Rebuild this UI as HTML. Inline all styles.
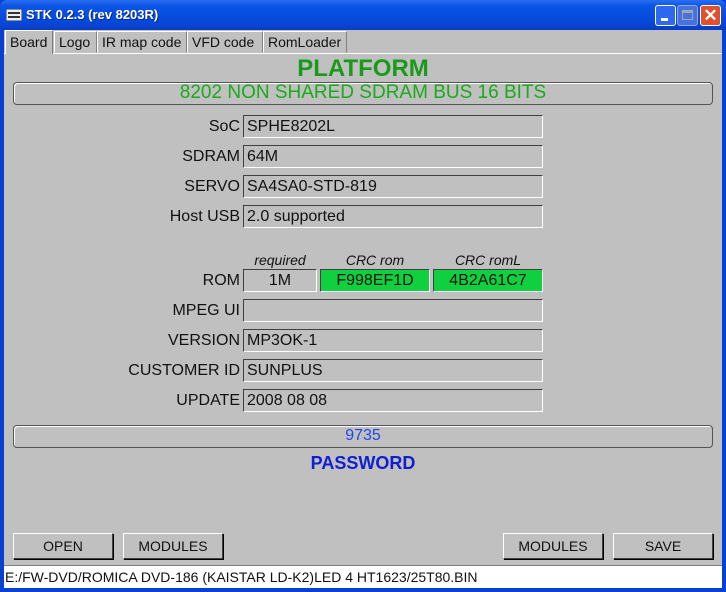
<!DOCTYPE html>
<html><head><style>
*{margin:0;padding:0;box-sizing:border-box}
body{width:726px;height:592px;background:#0841d0;font-family:"Liberation Sans",Arial,sans-serif;position:relative;overflow:hidden}
.title{position:absolute;left:0;top:0;width:726px;height:30px;background:linear-gradient(#2a6df2,#0a55e6 20%,#0546d8 80%,#0a3cc0);border-radius:7px 7px 0 0}
.title span{position:absolute;left:26px;top:7px;color:#fff;font-weight:bold;font-size:13px;font-family:"Liberation Sans",sans-serif;text-shadow:1px 1px #0a2a80}
.body{position:absolute;left:4px;top:30px;width:718px;height:558px;background:#c0c0c0}
.a{position:absolute}
.lbl{position:absolute;font-size:16px;color:#111;text-align:right;width:200px}
.fld{position:absolute;height:23px;background:#c0c0c0;border:1px solid;border-color:#404040 #fff #fff #404040;font-size:16px;padding:2px 3px;color:#111;white-space:nowrap}
.bar{position:absolute;left:9px;width:700px;height:23px;border:1px solid #555;border-radius:4px;box-shadow:inset 1px 1px #fff;text-align:center;font-size:19px;line-height:20px}
.btn{position:absolute;top:503px;width:100px;height:26px;border:1px solid;border-color:#fff #404040 #404040 #fff;box-shadow:1px 1px #000;text-align:center;font-size:14px;line-height:24px;color:#111}
.tab{position:absolute;top:1px;height:22px;border:1px solid;border-color:#fff #808080 #c0c0c0 #fff;font-size:14px;padding:2px 4px;color:#111;white-space:nowrap}
.hd{position:absolute;font-size:14px;font-style:italic;text-align:center;color:#111;top:222px}
</style></head><body>
<div class="title">
<svg class="a" style="left:6px;top:9px" width="16" height="12"><rect x="0" y="0" width="16" height="12" fill="#eee" stroke="#333"/><rect x="2" y="3" width="12" height="2" fill="#333"/><rect x="2" y="7" width="12" height="2" fill="#333"/></svg>
<span>STK 0.2.3 (rev 8203R)</span>
<div class="a" style="left:655px;top:5px;width:21px;height:21px;border:1px solid #fff;border-radius:3px;background:#2d68ee"><div class="a" style="left:5px;top:12px;width:7px;height:3px;background:#fff"></div></div>
<div class="a" style="left:677px;top:5px;width:21px;height:21px;border:1px solid #8aa8ee;border-radius:3px;background:#4a70dc"><div class="a" style="left:4px;top:4px;width:11px;height:10px;border:1px solid #9ab;border-top-width:3px"></div></div>
<div class="a" style="left:700px;top:5px;width:21px;height:21px;border:1px solid #fff;border-radius:3px;background:#e0502a;color:#fff;font-size:17px;line-height:19px;text-align:center;font-weight:bold">✕</div>
</div>
<div class="body">
<div class="a" style="left:0;top:23px;width:718px;height:1px;background:#fff"></div>
<div class="tab" style="left:1px;top:0;height:24px;border-bottom:none;background:#c0c0c0;padding-top:3px;width:48px">Board</div>
<div class="tab" style="left:50px;width:43px">Logo</div>
<div class="tab" style="left:93px;width:90px">IR map code</div>
<div class="tab" style="left:183px;width:76px">VFD code</div>
<div class="tab" style="left:259px;width:84px">RomLoader</div>
<div class="a" style="left:0;top:25px;width:718px;text-align:center;font-size:24px;font-weight:bold;color:#1a9a1a">PLATFORM</div>
<div class="bar" style="top:52px;color:#1aaa1a">8202 NON SHARED SDRAM BUS 16 BITS</div>
<div class="lbl" style="left:36px;top:88px">SoC</div><div class="fld" style="left:239px;top:85px;width:300px">SPHE8202L</div>
<div class="lbl" style="left:36px;top:118px">SDRAM</div><div class="fld" style="left:239px;top:115px;width:300px">64M</div>
<div class="lbl" style="left:36px;top:148px">SERVO</div><div class="fld" style="left:239px;top:145px;width:300px">SA4SA0-STD-819</div>
<div class="lbl" style="left:36px;top:178px">Host USB</div><div class="fld" style="left:239px;top:175px;width:300px">2.0 supported</div>
<div class="hd" style="left:239px;width:74px">required</div>
<div class="hd" style="left:316px;width:110px">CRC rom</div>
<div class="hd" style="left:429px;width:110px">CRC romL</div>
<div class="lbl" style="left:36px;top:242px">ROM</div>
<div class="fld" style="left:239px;top:239px;width:74px;text-align:center">1M</div>
<div class="fld" style="left:316px;top:239px;width:110px;text-align:center;background:#10d040">F998EF1D</div>
<div class="fld" style="left:429px;top:239px;width:110px;text-align:center;background:#10d040">4B2A61C7</div>
<div class="lbl" style="left:36px;top:272px">MPEG UI</div><div class="fld" style="left:239px;top:269px;width:300px"></div>
<div class="lbl" style="left:36px;top:302px">VERSION</div><div class="fld" style="left:239px;top:299px;width:300px">MP3OK-1</div>
<div class="lbl" style="left:36px;top:332px">CUSTOMER ID</div><div class="fld" style="left:239px;top:329px;width:300px">SUNPLUS</div>
<div class="lbl" style="left:36px;top:362px">UPDATE</div><div class="fld" style="left:239px;top:359px;width:300px">2008 08 08</div>
<div class="bar" style="top:395px;color:#2244ee;font-size:16px;line-height:20px">9735</div>
<div class="a" style="left:0;top:423px;width:718px;text-align:center;font-size:18px;font-weight:bold;color:#1020d0">PASSWORD</div>
<div class="btn" style="left:9px">OPEN</div>
<div class="btn" style="left:119px">MODULES</div>
<div class="btn" style="left:499px">MODULES</div>
<div class="btn" style="left:609px">SAVE</div>
<div class="a" style="left:0;top:535px;width:718px;height:23px;background:#fff;border-top:1px solid #808080;font-size:14px;padding:3px 1px;color:#111;white-space:nowrap">E:/FW-DVD/ROMICA DVD-186 (KAISTAR LD-K2)LED 4 HT1623/25T80.BIN</div>
</div>
</body></html>
